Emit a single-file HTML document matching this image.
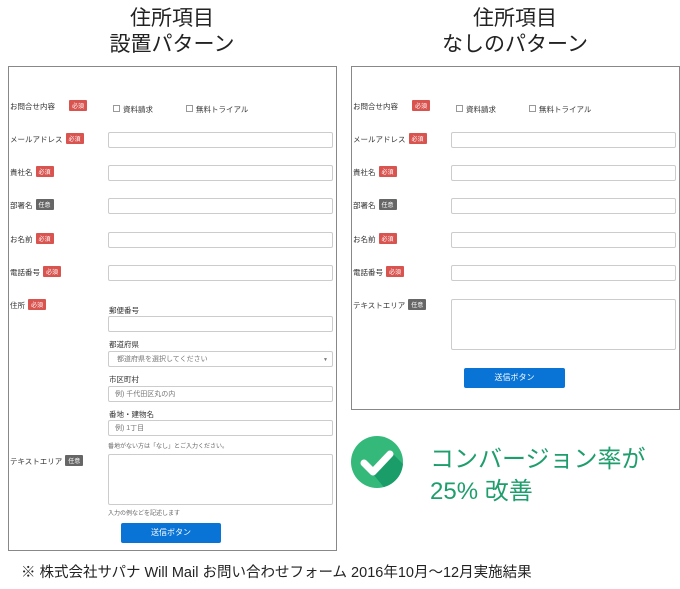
<!DOCTYPE html>
<html><head><meta charset="utf-8"><style>
body{margin:0;width:680px;height:589px;background:#fff;position:relative;font-family:"Liberation Sans","Noto Sans CJK JP",sans-serif;overflow:hidden}
.a{position:absolute;white-space:nowrap}
.t{font-size:21px;color:#222;text-align:center;width:300px;line-height:26px}
.box{position:absolute;border:1px solid #888;background:#fff}
.l{font-size:7.5px;color:#333}
.b{display:inline-block;font-size:6px;color:#fff;background:#d9534f;padding:1px 3px;margin-left:3px;vertical-align:1px;border-radius:1px}
.g{background:#666}
.in{position:absolute;border:1px solid #ccc;border-radius:2px;background:#fff;height:16px;font-size:7px;color:#777;line-height:16px;padding-left:6px;box-sizing:border-box}
.cb{display:inline-block;width:5px;height:5px;border:1px solid #999;margin-right:3px;vertical-align:0}
.btn{position:absolute;background:#0a74d6;color:#fff;font-size:8px;text-align:center;line-height:20px;border-radius:2px}
.h{font-size:6px;color:#666}
</style></head><body>
<div class="a t" style="left:22px;top:6px">住所項目<br>設置パターン</div>
<div class="a t" style="left:365px;top:6px">住所項目<br>なしのパターン</div>

<div class="box" style="left:8px;top:66px;width:327px;height:483px"></div>
<div class="box" style="left:351px;top:66px;width:327px;height:342px"></div>

<!-- left form -->
<div class="a l" style="left:10px;top:100px">お問合せ内容<span class="b" style="margin-left:14px">必須</span></div>
<div class="a l" style="left:113px;top:104px"><span class="cb"></span>資料請求</div>
<div class="a l" style="left:186px;top:104px"><span class="cb"></span>無料トライアル</div>
<div class="a l" style="left:10px;top:133px">メールアドレス<span class="b">必須</span></div>
<div class="in" style="left:108px;top:132px;width:225px"></div>
<div class="a l" style="left:10px;top:166px">貴社名<span class="b">必須</span></div>
<div class="in" style="left:108px;top:165px;width:225px"></div>
<div class="a l" style="left:10px;top:199px">部署名<span class="b g">任意</span></div>
<div class="in" style="left:108px;top:198px;width:225px"></div>
<div class="a l" style="left:10px;top:233px">お名前<span class="b">必須</span></div>
<div class="in" style="left:108px;top:232px;width:225px"></div>
<div class="a l" style="left:10px;top:266px">電話番号<span class="b">必須</span></div>
<div class="in" style="left:108px;top:265px;width:225px"></div>
<div class="a l" style="left:10px;top:299px">住所<span class="b">必須</span></div>
<div class="a l" style="left:109px;top:305px">郵便番号</div>
<div class="in" style="left:108px;top:316px;width:225px"></div>
<div class="a l" style="left:109px;top:339px">都道府県</div>
<div class="in" style="left:108px;top:351px;width:225px;padding-left:8px">都道府県を選択してください<span style="position:absolute;right:4px;font-size:5px">▼</span></div>
<div class="a l" style="left:109px;top:374px">市区町村</div>
<div class="in" style="left:108px;top:386px;width:225px">例) 千代田区丸の内</div>
<div class="a l" style="left:109px;top:409px">番地・建物名</div>
<div class="in" style="left:108px;top:420px;width:225px">例) 1丁目</div>
<div class="a h" style="left:108px;top:441px">番地がない方は「なし」とご入力ください。</div>
<div class="a l" style="left:10px;top:455px">テキストエリア<span class="b g">任意</span></div>
<div class="in" style="left:108px;top:454px;width:225px;height:51px"></div>
<div class="a h" style="left:108px;top:508px">入力の例などを記述します</div>
<div class="btn" style="left:121px;top:523px;width:100px">送信ボタン</div>

<!-- right form -->
<div class="a l" style="left:353px;top:100px">お問合せ内容<span class="b" style="margin-left:14px">必須</span></div>
<div class="a l" style="left:456px;top:104px"><span class="cb"></span>資料請求</div>
<div class="a l" style="left:529px;top:104px"><span class="cb"></span>無料トライアル</div>
<div class="a l" style="left:353px;top:133px">メールアドレス<span class="b">必須</span></div>
<div class="in" style="left:451px;top:132px;width:225px"></div>
<div class="a l" style="left:353px;top:166px">貴社名<span class="b">必須</span></div>
<div class="in" style="left:451px;top:165px;width:225px"></div>
<div class="a l" style="left:353px;top:199px">部署名<span class="b g">任意</span></div>
<div class="in" style="left:451px;top:198px;width:225px"></div>
<div class="a l" style="left:353px;top:233px">お名前<span class="b">必須</span></div>
<div class="in" style="left:451px;top:232px;width:225px"></div>
<div class="a l" style="left:353px;top:266px">電話番号<span class="b">必須</span></div>
<div class="in" style="left:451px;top:265px;width:225px"></div>
<div class="a l" style="left:353px;top:299px">テキストエリア<span class="b g">任意</span></div>
<div class="in" style="left:451px;top:299px;width:225px;height:51px"></div>
<div class="btn" style="left:464px;top:368px;width:101px">送信ボタン</div>

<!-- result -->
<svg class="a" style="left:351px;top:436px" width="52" height="52" viewBox="0 0 52 52">
<defs><clipPath id="c"><circle cx="26" cy="26" r="26"/></clipPath></defs>
<circle cx="26" cy="26" r="26" fill="#35b97b"/>
<path d="M22 38 L42 18 L60 36 L40 60 Z" fill="#1a9d68" clip-path="url(#c)"/>
<path d="M13 27 L22 36 L39 18" fill="none" stroke="#fff" stroke-width="7" stroke-linecap="round" stroke-linejoin="round"/>
</svg>
<div class="a" style="left:430px;top:444px;font-size:24px;line-height:32px;color:#1e9e6c">コンバージョン率が<br>25% 改善</div>

<div class="a" style="left:21px;top:561px;font-size:14.5px;color:#222">※ 株式会社サパナ Will Mail お問い合わせフォーム 2016年10月～12月実施結果</div>
</body></html>
